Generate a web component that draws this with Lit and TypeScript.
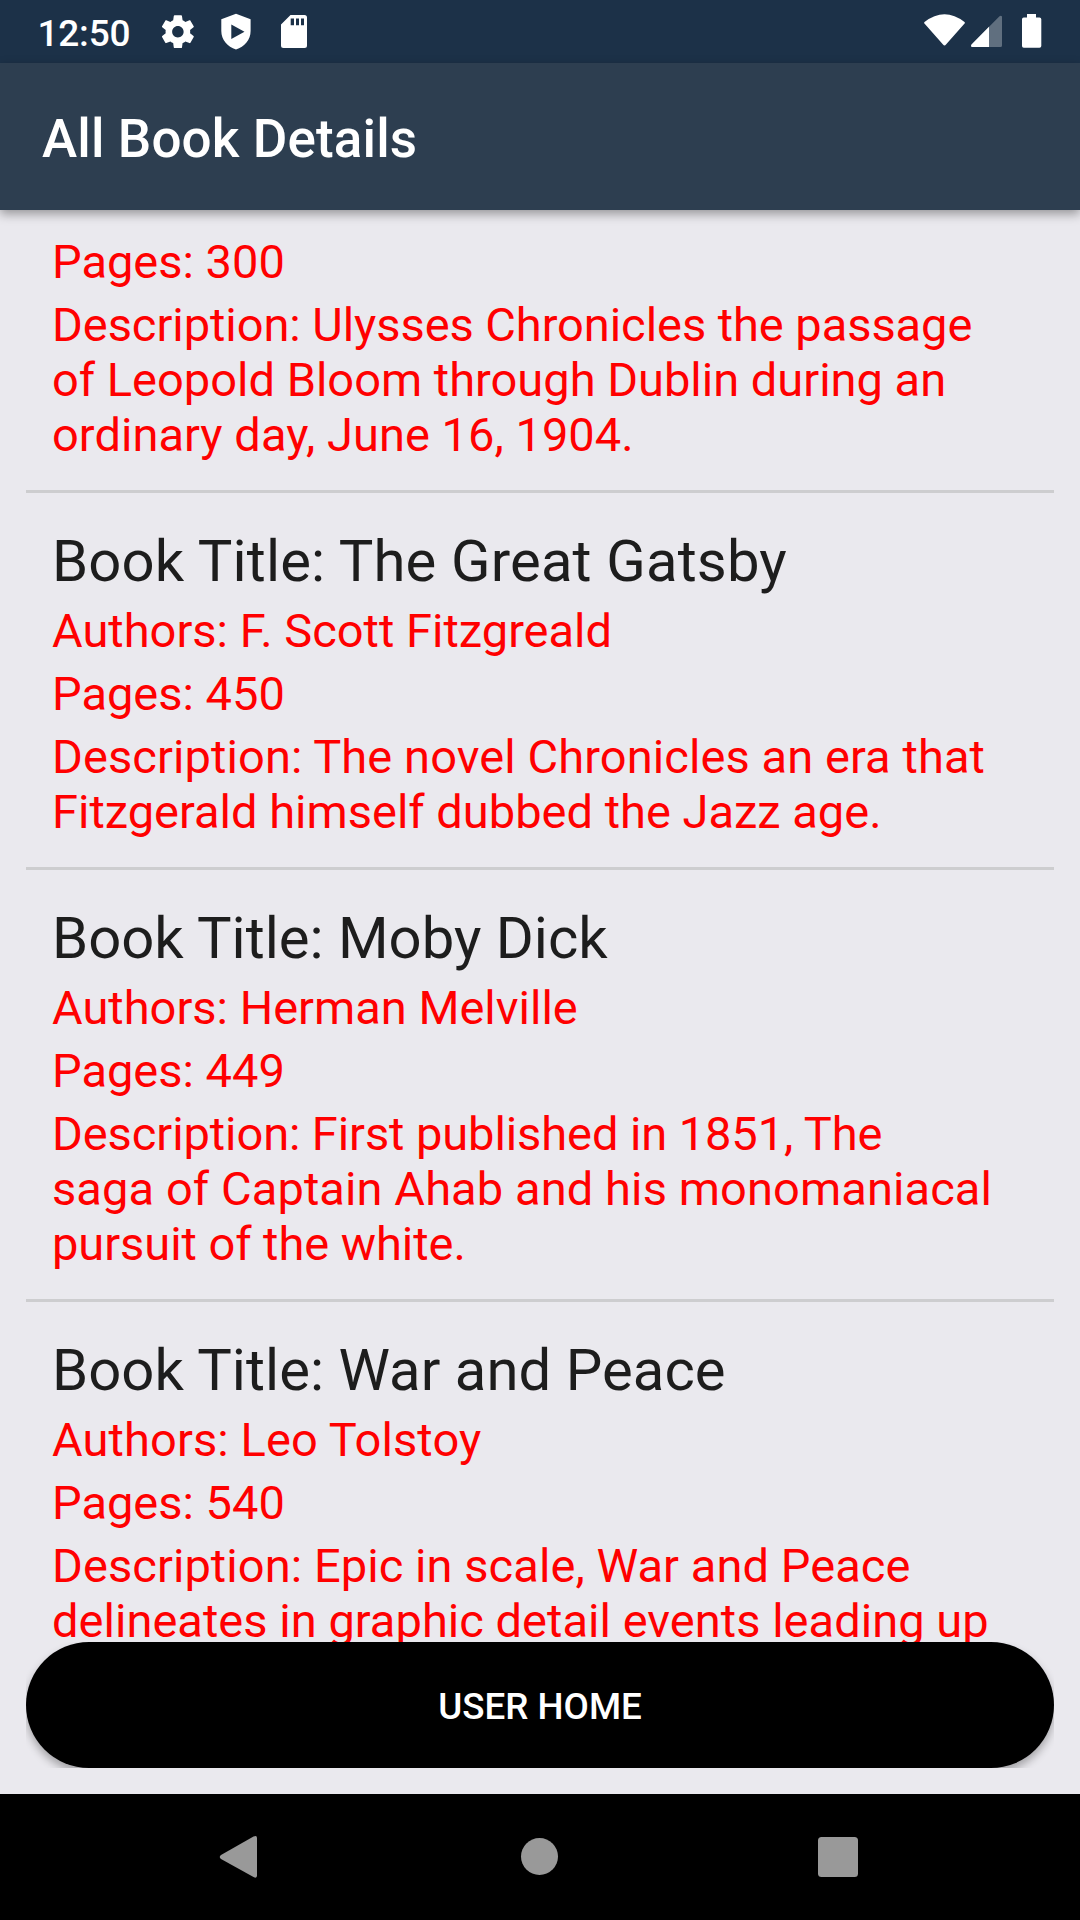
import { LitElement, html, css, svg } from "lit";
import { customElement } from "lit/decorators.js";
import { styleMap } from "lit/directives/style-map.js";

/** A run of text with its letter tracking in pixels. */
interface Run { text: string; tracking?: number; }
interface Book { title?: Run; authors?: Run; pages: number; description: Run[]; }

const BOOKS: Book[] = [
  {
    pages: 300,
    description: [
      { text: "Description: Ulysses Chronicles the passage", tracking: -0.055 },
      { text: "of Leopold Bloom through Dublin during an" },
      { text: "ordinary day, June 16, 1904.", tracking: 0.04 },
    ],
  },
  {
    title: { text: "The Great Gatsby", tracking: 0.16 },
    authors: { text: "F. Scott Fitzgreald" },
    pages: 450,
    description: [
      { text: "Description: The novel Chronicles an era that", tracking: 0.09 },
      { text: "Fitzgerald himself dubbed the Jazz age." },
    ],
  },
  {
    title: { text: "Moby Dick" },
    authors: { text: "Herman Melville" },
    pages: 449,
    description: [
      { text: "Description: First published in 1851, The", tracking: -0.085 },
      { text: "saga of Captain Ahab and his monomaniacal", tracking: 0.1 },
      { text: "pursuit of the white.", tracking: -0.05 },
    ],
  },
  {
    title: { text: "War and Peace", tracking: 0.05 },
    authors: { text: "Leo Tolstoy", tracking: 0.1 },
    pages: 540,
    description: [
      { text: "Description: Epic in scale, War and Peace", tracking: 0.07 },
      { text: "delineates in graphic detail events leading up", tracking: 0.03 },
    ],
  },
];

const tracked = (r?: Run) => styleMap({ letterSpacing: `${r?.tracking ?? 0}px` });

const GEAR = "M19.43 12.98c.04-.32.07-.64.07-.98s-.03-.66-.07-.98l2.11-1.65c.19-.15.24-.42.12-.64l-2-3.46c-.12-.22-.39-.3-.61-.22l-2.49 1c-.52-.4-1.08-.73-1.69-.98l-.38-2.65C14.46 2.18 14.25 2 14 2h-4c-.25 0-.46.18-.49.42l-.38 2.65c-.61.25-1.17.59-1.69.98l-2.49-1c-.23-.09-.49 0-.61.22l-2 3.46c-.13.22-.07.49.12.64l2.11 1.65c-.04.32-.07.65-.07.98s.03.66.07.98l-2.11 1.65c-.19.15-.24.42-.12.64l2 3.46c.12.22.39.3.61.22l2.49-1c.52.4 1.08.73 1.69.98l.38 2.65c.03.24.24.42.49.42h4c.25 0 .46-.18.49-.42l.38-2.65c.61-.25 1.17-.59 1.69-.98l2.49 1c.23.09.49 0 .61-.22l2-3.46c.12-.22.07-.49-.12-.64l-2.11-1.65zM12 15.5c-1.93 0-3.5-1.57-3.5-3.5s1.57-3.5 3.5-3.5 3.5 1.57 3.5 3.5-1.57 3.5-3.5 3.5z";

@customElement("status-bar")
class StatusBar extends LitElement {
  static styles = css`
    :host { display: block; height: 63px; background: #1c3148; color: #fff; }
    svg { display: block; width: 1080px; height: 63px; }
    .clock { font: 500 37px Roboto, sans-serif; fill: #fff; }
  `;
  render() {
    return html`<svg viewBox="0 0 1080 63" fill="#fff">
      ${svg`
      <text class="clock" x="37.5" y="46" textLength="93">12:50</text>
      <path transform="translate(158.2 12) scale(1.64)" d=${GEAR} />
      <path fill-rule="evenodd" d="M236 13.7 L250.6 19.2 V31 C250.6 39.5 244.5 47 236 49.5 C227.500 47 221.300 39.500 221.300 31 V19.200 Z M231.300 24.500 V39 L244.500 31.800 Z" />
      <path fill-rule="evenodd" d="M290.500 15 H304.500 Q307 15 307 17.500 V45.500 Q307 48 304.500 48 H283.500 Q281 48 281 45.500 V24.500 Z M290.700 18.500 V25.200 H294 V18.500 Z M296 18.500 V25.200 H299 V18.500 Z M301 18.500 V25.200 H304 V18.500 Z" />
      <path d="M924.500 22 Q944.500 6.500 964.500 22 L965 23 L946 44.500 Q944.500 46.500 943 44.500 L924 23 Z" />
      <path fill-opacity=".3" d="M971.500 46.900 Q970.500 45.500 971.500 44.500 L999.500 16.300 Q1001 15.300 1002 16.500 V45.500 Q1002 47 1000.500 47 Z" />
      <path d="M971.500 46.900 Q970.500 45.500 971.500 44.500 L989 26.800 V47 Z" />
      <path d="M1027 14 H1036 V17.500 H1039.500 Q1041.300 17.500 1041.300 19.300 V46 Q1041.300 47.800 1039.500 47.800 H1023.800 Q1022 47.800 1022 46 V19.300 Q1022 17.500 1023.800 17.500 H1027 Z" />`}
    </svg>`;
  }
}

@customElement("book-item")
class BookItem extends LitElement {
  static properties = { book: { attribute: false } };
  declare book: Book;
  static styles = css`
    :host { display: block; padding: 26px; }
    .title { font-size: 58px; line-height: 68px; padding: 8px 0 2px; color: #1d1d1d; white-space: nowrap; }
    .line { font-size: 47px; line-height: 55px; padding: 6px 0 2px; color: #f00; white-space: nowrap; }
    .run { display: block; }
  `;
  render() {
    const b = this.book;
    return html`
      ${b.title ? html`
        <div class="title" style=${tracked(b.title)}>Book Title: ${b.title.text}</div>
        <div class="line" style=${tracked(b.authors)}>Authors: ${b.authors?.text}</div>` : ""}
      <div class="line">Pages: ${b.pages}</div>
      <div class="line">${b.description.map((r) => html`<span class="run" style=${tracked(r)}>${r.text}</span>`)}</div>`;
  }
}

@customElement("app-root")
class AppRoot extends LitElement {
  static styles = css`
    :host { display: flex; flex-direction: column; width: 1080px; height: 1920px; overflow: hidden; background: #eae9ee; font-family: Roboto, sans-serif; }
    .bar { flex: none; height: 147px; box-sizing: border-box; background: #2d3e50; color: #fff; display: flex; align-items: center; padding: 5px 42px 0; font-size: 53px; font-weight: 500; letter-spacing: 0.12px; white-space: nowrap; box-shadow: 0 4px 10px rgba(0, 0, 0, .36); z-index: 1; }
    .list { flex: none; height: 1432px; box-sizing: border-box; padding: 0 26px; overflow: hidden; display: flex; flex-direction: column; }
    book-item { flex: none; }
    book-item:first-child { padding-top: 18px; }
    .rule { flex: none; height: 3px; background: #cdcdcf; }
    .footer { flex: none; height: 126px; margin: 0 26px 26px; overflow: hidden; }
    .home { display: flex; align-items: center; justify-content: center; width: 100%; height: 126px; padding: 2px 0 0; border: 0; border-radius: 63px; background: #000; color: #fff; font: 500 36.75px Roboto, sans-serif; box-shadow: 0 5px 8px rgba(0, 0, 0, .3); }
    .nav { flex: none; height: 126px; background: #000; }
    .nav svg { display: block; }
  `;
  render() {
    return html`
      <status-bar></status-bar>
      <div class="bar">All Book Details</div>
      <div class="list">
        ${BOOKS.map((b, i) => html`${i ? html`<div class="rule"></div>` : ""}<book-item .book=${b}></book-item>`)}
      </div>
      <div class="footer"><button class="home">USER HOME</button></div>
      <div class="nav"><svg width="1080" height="126" viewBox="0 0 1080 126" fill="#999">
        <path d="M221 61 L253.500 42.500 Q257 40.800 257 44 V81.500 Q257 84.800 253.500 83 L221 65 Q218.500 63 221 61 Z" />
        <circle cx="539.500" cy="62.500" r="18.500" />
        <rect x="818" y="43" width="40" height="40" rx="3.500" />
      </svg></div>`;
  }
}
